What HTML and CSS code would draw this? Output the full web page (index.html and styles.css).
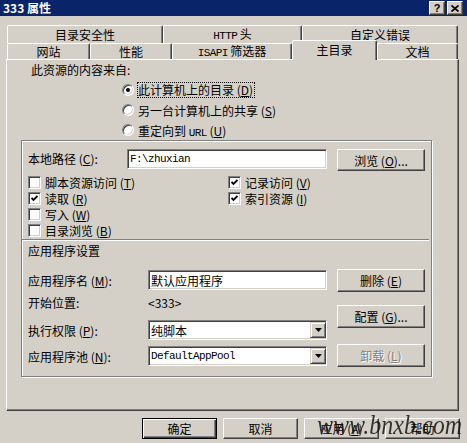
FILE: index.html
```html
<!DOCTYPE html>
<html lang="zh-CN">
<head>
  <meta charset="UTF-8" />
  <title>333 属性</title>
  <link rel="stylesheet" href="styles.css">
</head>
<body>
  <div class="window">
    <div class="titlebar">
      <span class="title">333 属性</span>
      <div class="caption-btns">
        <span class="cbtn">?</span>
        <span class="cbtn">
          <svg width="8" height="7" viewBox="0 0 8 7"><path d="M0.5 0.5 L7.5 6.5 M7.5 0.5 L0.5 6.5" stroke="#000" stroke-width="1.8"/></svg>
        </span>
      </div>
    </div>

    <div class="tabs">
      <div class="tabrow back">
        <div class="tab w156"><span>目录安全性</span></div>
        <div class="tab w139"><span><span class="en">HTTP</span> 头</span></div>
        <div class="tab w156"><span>自定义错误</span></div>
      </div>
      <div class="tabrow front">
        <div class="tab w83"><span>网站</span></div>
        <div class="tab w82"><span>性能</span></div>
        <div class="tab w120"><span><span class="en">ISAPI</span> 筛选器</span></div>
        <div class="tab w85 active"><span>主目录</span></div>
        <div class="tab w81"><span>文档</span></div>
      </div>
    </div>

    <div class="panel">
      <div class="source-title">此资源的内容来自:</div>
      <div class="radios">
        <div class="radio-row"><span class="radio checked"></span><span class="focus">此计算机上的目录 (<u>D</u>)</span></div>
        <div class="radio-row"><span class="radio"></span><span>另一台计算机上的共享 (<u>S</u>)</span></div>
        <div class="radio-row"><span class="radio"></span><span>重定向到 <span class="en">URL</span> (<u>U</u>)</span></div>
      </div>

      <div class="group">
        <div class="path-row">
          <span class="path-label">本地路径 (<u>C</u>):</span>
          <div class="input path-input"><span class="en">F:\zhuxian</span></div>
          <button class="btn">浏览 (<u>O</u>)...</button>
        </div>

        <div class="checks">
          <div class="check-row"><span class="check"></span><span>脚本资源访问 (<u>T</u>)</span></div>
          <div class="check-row"><span class="check"><svg width="7" height="7" viewBox="0 0 7 7"><path d="M0.5 3 L2.5 5 L6.5 1" fill="none" stroke="#000" stroke-width="1.8"/></svg></span><span>记录访问 (<u>V</u>)</span></div>
          <div class="check-row"><span class="check"><svg width="7" height="7" viewBox="0 0 7 7"><path d="M0.5 3 L2.5 5 L6.5 1" fill="none" stroke="#000" stroke-width="1.8"/></svg></span><span>读取 (<u>R</u>)</span></div>
          <div class="check-row"><span class="check"><svg width="7" height="7" viewBox="0 0 7 7"><path d="M0.5 3 L2.5 5 L6.5 1" fill="none" stroke="#000" stroke-width="1.8"/></svg></span><span>索引资源 (<u>I</u>)</span></div>
          <div class="check-row"><span class="check"></span><span>写入 (<u>W</u>)</span></div>
          <div class="check-row"></div>
          <div class="check-row"><span class="check"></span><span>目录浏览 (<u>B</u>)</span></div>
        </div>

        <div class="sep"></div>
        <div class="app-title">应用程序设置</div>

        <div class="app">
          <div class="app-fields">
            <div class="field-row">
              <span class="field-label">应用程序名 (<u>M</u>):</span>
              <div class="input field">默认应用程序</div>
            </div>
            <div class="field-row start-row">
              <span class="field-label">开始位置:</span>
              <span>&lt;333&gt;</span>
            </div>
            <div class="field-row exec-row">
              <span class="field-label">执行权限 (<u>P</u>):</span>
              <div class="input field select">纯脚本<span class="drop"><svg width="7" height="4" viewBox="0 0 7 4"><polygon points="0,0 7,0 3.5,4" fill="#000"/></svg></span></div>
            </div>
            <div class="field-row pool-row">
              <span class="field-label">应用程序池 (<u>N</u>):</span>
              <div class="input field select"><span class="en">DefaultAppPool</span><span class="drop"><svg width="7" height="4" viewBox="0 0 7 4"><polygon points="0,0 7,0 3.5,4" fill="#000"/></svg></span></div>
            </div>
          </div>
          <div class="app-btns">
            <button class="btn">删除 (<u>E</u>)</button>
            <button class="btn cfg">配置 (<u>G</u>)...</button>
            <button class="btn unload disabled">卸载 (<u>L</u>)</button>
          </div>
        </div>
      </div>
    </div>

    <div class="dlg-btns">
      <button class="btn dlg default">确定</button>
      <button class="btn dlg">取消</button>
      <button class="btn dlg">应用 (<u>A</u>)</button>
      <button class="btn dlg">帮助</button>
    </div>

    <div class="watermark">www.bnxb.com</div>
  </div>
</body>
</html>
```

FILE: styles.css
```css
body {
  margin: 0;
  background: #d4d0c8;
  font-family: "Noto Sans CJK SC", sans-serif;
  font-size: 12px;
  color: #000;
}

.window {
  position: relative;
  width: 467px;
  height: 443px;
  overflow: hidden;
}

.en {
  font-family: "Liberation Mono", monospace;
  font-size: 11px;
  letter-spacing: -0.6px;
}

u {
  text-underline-offset: 1px;
}

/* title bar */
.titlebar {
  height: 16px;
  background: #0a246a;
  display: flex;
  align-items: center;
  justify-content: space-between;
}

.title {
  color: #fff;
  font-weight: bold;
  padding-left: 3px;
  line-height: 16px;
}

.caption-btns {
  display: flex;
  gap: 2px;
  margin-right: 4px;
}

.cbtn {
  width: 16px;
  height: 14px;
  box-sizing: border-box;
  background: #d4d0c8;
  border: 1px solid;
  border-color: #fff #404040 #404040 #fff;
  box-shadow: inset -1px -1px #808080;
  display: flex;
  align-items: center;
  justify-content: center;
  font-family: "Liberation Sans", sans-serif;
  font-weight: bold;
  font-size: 11px;
  line-height: 12px;
}

/* tabs */
.tabs {
  margin-top: 9px;
}

.tabrow {
  display: flex;
  padding-left: 7px;
}

.tabrow.back {
  height: 18px;
}

.tabrow.front {
  height: 16px;
  align-items: flex-end;
}

.tab {
  box-sizing: border-box;
  height: 100%;
  border-top: 1px solid #fff;
  border-left: 1px solid #fff;
  border-right: 1px solid #404040;
  box-shadow: inset -1px 0 #808080;
  border-radius: 2px 2px 0 0;
  background: #d4d0c8;
  display: flex;
  align-items: center;
  justify-content: center;
  line-height: 14px;
  white-space: nowrap;
}

.tabrow.front .tab {
  height: 16px;
}

.tabrow.front .tab.active {
  position: relative;
  z-index: 1;
  height: 20px;
  margin-bottom: -1px;
  align-items: flex-start;
  padding-top: 2px;
}

.w156 { width: 156px; }
.w139 { width: 139px; }
.w83 { width: 83px; }
.w82 { width: 82px; }
.w120 { width: 120px; }
.w85 { width: 85px; }
.w81 { width: 81px; }

/* page panel */
.panel {
  margin-left: 6px;
  width: 453px;
  height: 352px;
  box-sizing: border-box;
  border: 1px solid;
  border-color: #fff #404040 #404040 #fff;
  box-shadow: inset -1px -1px #808080;
}

.source-title {
  margin: 3px 0 0 24px;
  line-height: 14px;
}

.radios {
  margin: 3px 0 0 115px;
}

.radio-row {
  display: flex;
  align-items: center;
  height: 20px;
}

.radio {
  position: relative;
  width: 12px;
  height: 12px;
  box-sizing: border-box;
  border-radius: 50%;
  background: #fff;
  border: 1px solid;
  border-color: #808080 #fff #fff #808080;
  box-shadow: inset 1px 1px #404040, inset -1px -1px #d4d0c8;
  margin-right: 4px;
  flex: none;
}

.radio.checked::after {
  content: "";
  position: absolute;
  left: 3px;
  top: 3px;
  width: 4px;
  height: 4px;
  border-radius: 50%;
  background: #000;
}

.focus {
  outline: 1px dotted #000;
  line-height: 14px;
  padding-right: 1px;
}

/* group box */
.group {
  margin-left: 14px;
  width: 411px;
  height: 237px;
  box-sizing: border-box;
  border: 1px solid #808080;
  box-shadow: inset 1px 1px #fff, 1px 1px #fff;
}

.path-row {
  display: flex;
  align-items: flex-start;
  margin: 8px 0 0 6px;
}

.path-label {
  width: 99px;
  line-height: 20px;
}

.input {
  box-sizing: border-box;
  height: 20px;
  background: #fff;
  border: 1px solid;
  border-color: #808080 #fff #fff #808080;
  box-shadow: inset 1px 1px #404040, inset -1px -1px #d4d0c8;
  padding: 0 2px;
  display: flex;
  align-items: center;
  white-space: nowrap;
}

.path-input {
  width: 200px;
}

.btn {
  box-sizing: border-box;
  width: 88px;
  height: 23px;
  padding: 0;
  background: #d4d0c8;
  border: 1px solid;
  border-color: #fff #404040 #404040 #fff;
  box-shadow: inset -1px -1px #808080;
  font: inherit;
  color: #000;
  display: flex;
  align-items: center;
  justify-content: center;
}

.path-row .btn {
  margin-left: 10px;
  height: 22px;
}

.btn.disabled {
  color: #808080;
  text-shadow: 1px 1px #fff;
}

.checks {
  display: grid;
  grid-template-columns: 200px 200px;
  grid-auto-rows: 16px;
  margin: 3px 0 0 6px;
}

.check-row {
  display: flex;
  align-items: center;
}

.check {
  width: 13px;
  height: 13px;
  box-sizing: border-box;
  background: #fff;
  border: 1px solid;
  border-color: #808080 #fff #fff #808080;
  box-shadow: inset 1px 1px #404040, inset -1px -1px #d4d0c8;
  margin-right: 4px;
  display: flex;
  align-items: center;
  justify-content: center;
  flex: none;
}

.sep {
  margin: 1px 2px 0 0;
  border-top: 1px solid #808080;
  border-bottom: 1px solid #fff;
}

.app-title {
  margin: 3px 0 0 6px;
  line-height: 14px;
}

.app {
  display: flex;
  margin: 11px 0 0 6px;
}

.app-fields {
  width: 299px;
}

.field-row {
  display: flex;
  align-items: center;
  height: 20px;
  margin-top: 1px;
}

.field-label {
  width: 120px;
  flex: none;
}

.field {
  width: 179px;
}

.start-row {
  height: 14px;
  margin-top: 5px;
}

.exec-row {
  margin-top: 11px;
}

.pool-row {
  margin-top: 6px;
}

.select {
  padding-right: 0;
}

.drop {
  margin-left: auto;
  width: 16px;
  height: 16px;
  box-sizing: border-box;
  background: #d4d0c8;
  border: 1px solid;
  border-color: #d4d0c8 #404040 #404040 #d4d0c8;
  box-shadow: inset 1px 1px #fff, inset -1px -1px #808080;
  display: flex;
  align-items: center;
  justify-content: center;
  flex: none;
}

.app-btns {
  margin-left: 10px;
  display: flex;
  flex-direction: column;
}

.app-btns .cfg {
  margin-top: 13px;
}

.app-btns .unload {
  margin-top: 16px;
}

/* dialog buttons */
.dlg-btns {
  display: flex;
  justify-content: flex-end;
  gap: 6px;
  margin-top: 7px;
  padding-right: 7px;
}

.btn.dlg {
  width: 75px;
  height: 21px;
}

.btn.default {
  border-color: #000;
  box-shadow: inset 1px 1px #fff, inset -1px -1px #404040, inset -2px -2px #808080;
}

.watermark {
  position: absolute;
  left: 317px;
  top: 412px;
  font-family: "Liberation Serif", serif;
  font-style: italic;
  font-size: 27px;
  line-height: 27px;
  color: rgba(20, 20, 20, 0.85);
  transform: scaleX(0.89);
  transform-origin: left top;
}
```
